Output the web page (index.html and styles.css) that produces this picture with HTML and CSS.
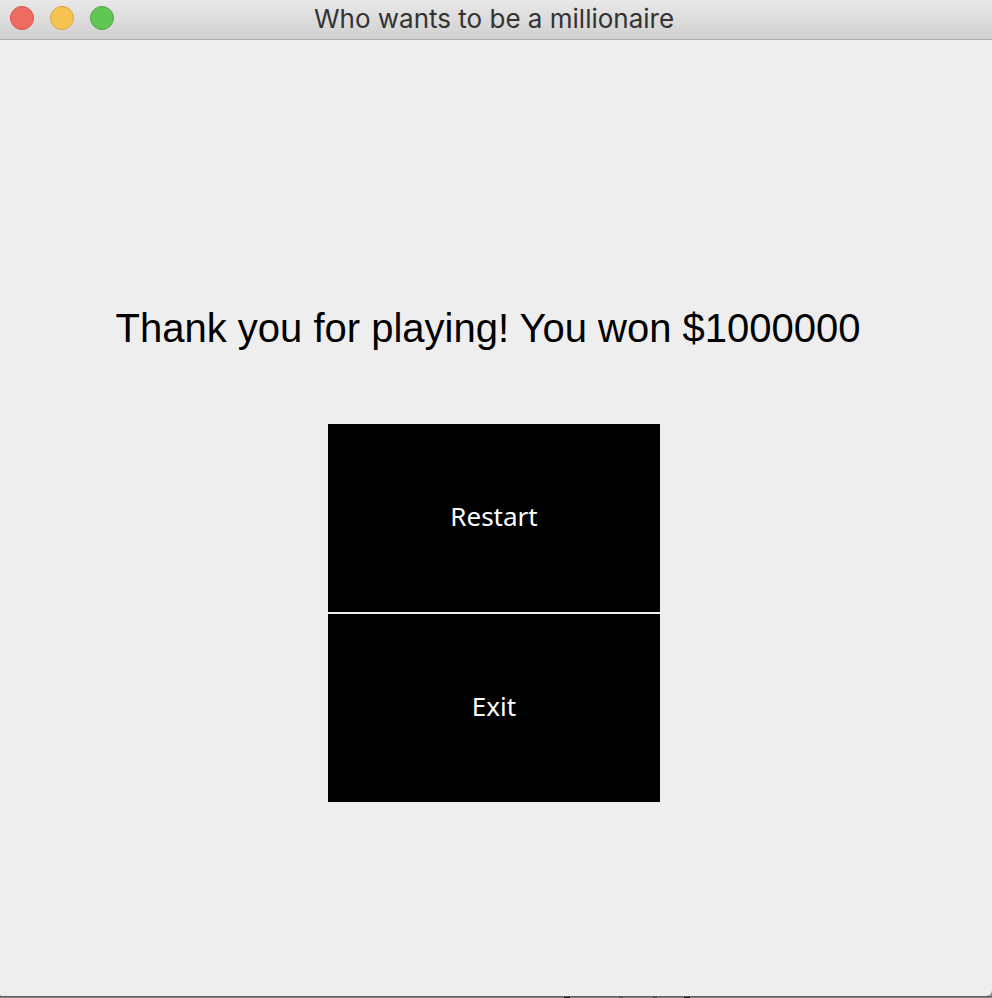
FILE: index.html
```html
<!DOCTYPE html>
<html lang="en">
<head>
<meta charset="utf-8">
<title>Who wants to be a millionaire</title>
<link rel="stylesheet" href="styles.css">
</head>
<body>
<div class="window">
  <header class="titlebar">
    <div class="controls">
      <button class="light close" type="button" aria-label="Close"></button>
      <button class="light minimize" type="button" aria-label="Minimize"></button>
      <button class="light zoom" type="button" aria-label="Zoom"></button>
    </div>
    <h1 class="title">Who wants to be a millionaire</h1>
  </header>
  <main class="content">
    <p class="message">Thank you for playing! You won $1000000</p>
    <div class="actions">
      <button class="action" type="button">Restart</button>
      <button class="action" type="button">Exit</button>
    </div>
  </main>
</div>
<svg class="backdrop" height="2" aria-hidden="true">
  <path d="M564 1.5h6M684 1.5h6" stroke="#111111"/>
  <path d="M619 1.5h4M653 1.5h4" stroke="#505050"/>
</svg>
</body>
</html>
```
FILE: styles.css
```css
* { box-sizing: border-box; }

body {
  margin: 0;
  background: #999999;
}

.window {
  display: flex;
  flex-direction: column;
  min-height: calc(100vh - 2px);
  background: #eeeeee;
  border-radius: 0 0 6px 2px;
}

.backdrop {
  display: block;
  width: 100%;
  background: linear-gradient(#606060 50%, #858383 50%);
}

.titlebar {
  display: grid;
  grid-template-columns: 1fr auto 1fr;
  align-items: start;
  height: 40px;
  padding: 3px 14px 0 10px;
  background: linear-gradient(#e8e8e8, #d0d0d0);
  border-bottom: 1px solid #acacac;
}

.controls {
  display: flex;
  gap: 16px;
  padding-top: 3px;
}

.light {
  width: 24px;
  height: 24px;
  padding: 0;
  border: 1px solid;
  border-radius: 50%;
}

.close { background: #ed6b60; border-color: #d9534a; }
.minimize { background: #f6c351; border-color: #d9a43c; }
.zoom { background: #62c655; border-color: #4ea73f; }

.title {
  margin: 0;
  font: 400 26px/32px Inter, sans-serif;
  color: #333333;
}

.content {
  display: flex;
  flex-direction: column;
  align-items: center;
  padding: 264px 4px 24px 0;
}

.message {
  margin: 0 12px 72px 0;
  font: 40px/48px "Liberation Sans", Arial, sans-serif;
  color: #000000;
}

.actions {
  display: grid;
  grid-auto-rows: 188px;
  gap: 2px;
  width: 332px;
  max-width: 100%;
}

.action {
  padding: 0 0 4px;
  border: 0;
  background: #000000;
  color: #ffffff;
  font: 26px/32px "Noto Sans", sans-serif;
}
```
